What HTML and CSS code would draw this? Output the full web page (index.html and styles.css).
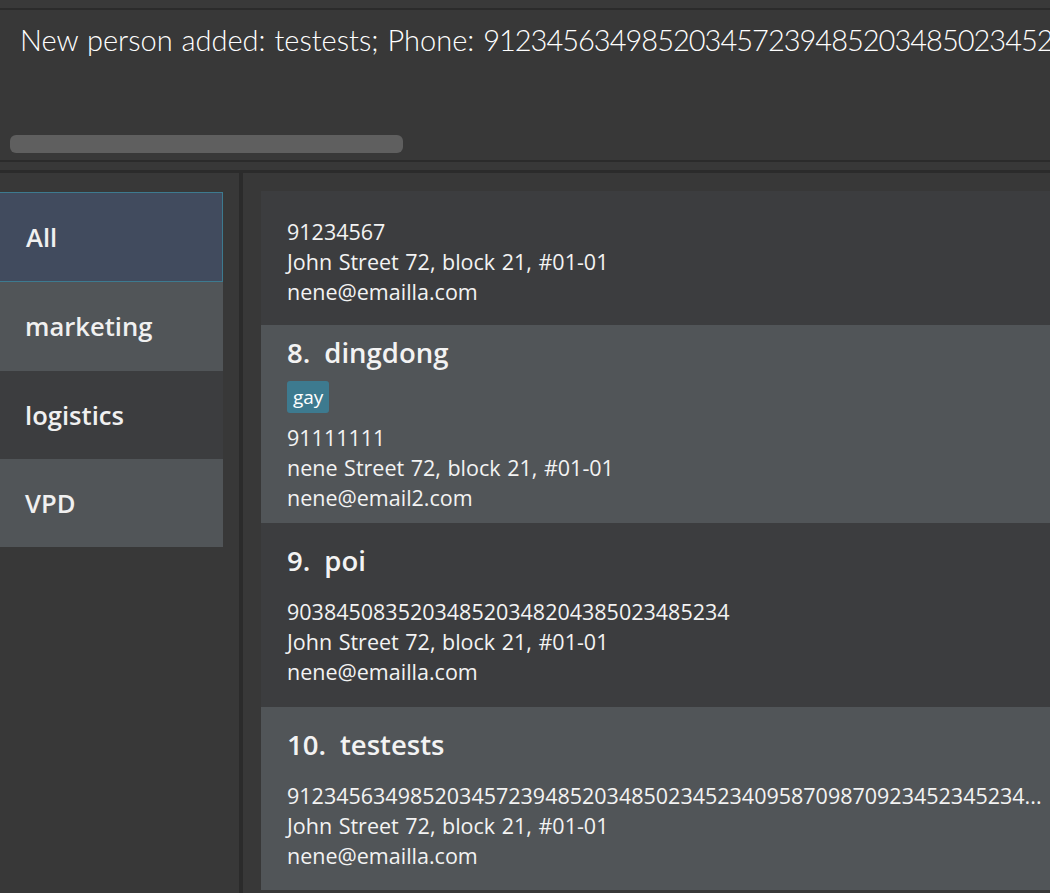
FILE: index.html
```html
<!DOCTYPE html>
<html lang="en">
<head>
<meta charset="utf-8">
<title>Address Book</title>
<link rel="stylesheet" href="styles.css">
</head>
<body>
<div class="app">
  <div class="command-strip"></div>
  <div class="result">
    <p class="result-text">New person added: testests; Phone: <span class="result-number">912345634985203457239485203485023452340958709870923452345234</span>; Email: nene@emailla.com; Address: John Street 72, block 21, #01-01; Tags: </p>
    <div class="hscroll"><div class="hscroll-thumb"></div></div>
  </div>
  <div class="spacer-strip"></div>
  <div class="main">
    <nav class="groups">
      <div class="group group--selected">All</div>
      <div class="group group--alt group--tall">marketing</div>
      <div class="group">logistics</div>
      <div class="group group--alt">VPD</div>
    </nav>
    <section class="people">
      <article class="card card--clipped">
        <div class="line">91234567</div>
        <div class="line">John Street 72, block 21, #01-01</div>
        <div class="line">nene@emailla.com</div>
      </article>
      <article class="card card--alt">
        <div class="card-title"><span class="card-id">8.</span><span class="card-name">dingdong</span></div>
        <div class="tags"><span class="tag">gay</span></div>
        <div class="line">91111111</div>
        <div class="line">nene Street 72, block 21, #01-01</div>
        <div class="line">nene@email2.com</div>
      </article>
      <article class="card">
        <div class="card-title"><span class="card-id">9.</span><span class="card-name">poi</span></div>
        <div class="tags"></div>
        <div class="line">903845083520348520348204385023485234</div>
        <div class="line">John Street 72, block 21, #01-01</div>
        <div class="line">nene@emailla.com</div>
      </article>
      <article class="card card--alt card--last">
        <div class="card-title"><span class="card-id">10.</span><span class="card-name">testests</span></div>
        <div class="tags"></div>
        <div class="line">912345634985203457239485203485023452340958709870923452345234...</div>
        <div class="line">John Street 72, block 21, #01-01</div>
        <div class="line">nene@emailla.com</div>
      </article>
    </section>
  </div>
</div>
</body>
</html>
```

FILE: styles.css
```css
html, body {
  margin: 0;
  padding: 0;
}

body {
  background: #2b2b2b;
  font-family: "Open Sans", "Noto Sans", "DejaVu Sans", sans-serif;
  color: #f3f3f3;
}

.app {
  width: 1050px;
  height: 893px;
  display: flex;
  flex-direction: column;
  overflow: hidden;
}

.command-strip {
  height: 8px;
  background: #393939;
  border-bottom: 2px solid #2b2b2b;
  flex: none;
}

.result {
  height: 150px;
  box-sizing: border-box;
  background: #383838;
  display: flex;
  flex-direction: column;
  padding: 10px 0 7px 0;
  flex: none;
}

.result-text {
  margin: 0 0 0 20px;
  font-family: "Lato", "Open Sans", sans-serif;
  font-weight: 300;
  font-size: 29px;
  line-height: 40px;
  word-spacing: 1px;
  white-space: nowrap;
  color: #ffffff;
}

.result-number {
  letter-spacing: -1px;
}

.hscroll {
  margin-top: auto;
  padding-left: 10px;
}

.hscroll-thumb {
  width: 393px;
  height: 18px;
  border-radius: 6px;
  background: #5f5f5f;
}

.spacer-strip {
  height: 8px;
  background: #383838;
  border-top: 2px solid #2b2b2b;
  border-bottom: 3px solid #2b2b2b;
  flex: none;
}

.main {
  flex: 1;
  display: flex;
  background: #383838;
  min-height: 0;
}

.groups {
  width: 239px;
  flex: none;
  padding-top: 19px;
  border-right: 4px solid #2b2b2b;
}

.group {
  width: 223px;
  height: 88px;
  box-sizing: border-box;
  display: flex;
  align-items: center;
  padding-left: 25px;
  font-weight: 600;
  font-size: 25.6px;
  color: #f0f0f0;
  background: #3c3d3f;
}

.group--alt {
  background: #515558;
}

.group--tall {
  height: 89px;
}

.group--selected {
  height: 90px;
  padding-left: 26px;
  background: #414b5e;
  border: 1px solid #3d7a8f;
  border-left-width: 0;
}

.people {
  flex: 1;
  min-width: 0;
  padding: 18px 0 0 18px;
  overflow: hidden;
}

.card {
  min-height: 184px;
  box-sizing: border-box;
  padding: 10px 0 10px 26px;
  display: flex;
  flex-direction: column;
  justify-content: center;
  background: #3c3d3f;
}

.card--alt {
  background: #515558;
}

.card--clipped {
  min-height: 134px;
  justify-content: flex-end;
  padding-bottom: 18px;
}

.card--last {
  min-height: 183px;
}

.card-title {
  display: flex;
  font-weight: 600;
  font-size: 27.5px;
  line-height: 36px;
  color: #f3f3f3;
  white-space: nowrap;
}

.card-id {
  margin-right: 14px;
}

.tags {
  display: flex;
  gap: 6px;
  margin: 9px 0;
}

.tag {
  margin: 1px 0;
  height: 32px;
  box-sizing: border-box;
  padding: 0 6px;
  display: flex;
  align-items: center;
  border-radius: 3px;
  background: #3d7a8f;
  color: #ffffff;
  font-size: 19px;
}

.line {
  font-size: 21.5px;
  line-height: 30px;
  word-spacing: 1px;
  white-space: nowrap;
  color: #f3f3f3;
}
```
